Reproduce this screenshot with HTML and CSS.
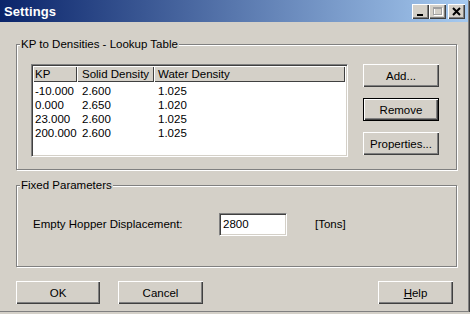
FILE: index.html
```html
<!DOCTYPE html>
<html lang="en">
<head>
  <meta charset="UTF-8">
  <title>Settings</title>
  <link rel="stylesheet" href="styles.css">
</head>

<body>
  <div class="window">

    <!-- Title bar -->
    <div class="titlebar">
      <span class="title">Settings</span>
      <div class="caption-buttons">
        <span class="cap-btn">
          <svg width="15" height="13" viewBox="0 0 15 13"><rect x="4" y="9" width="6" height="2" fill="#000"/></svg>
        </span>
        <span class="cap-btn">
          <svg width="15" height="13" viewBox="0 0 15 13">
            <rect x="4.5" y="3.5" width="8" height="7" fill="none" stroke="#fff"/>
            <rect x="3.5" y="2.5" width="8" height="7" fill="none" stroke="#a0a0a0"/>
            <line x1="3.5" y1="3.5" x2="11.5" y2="3.5" stroke="#a0a0a0"/>
          </svg>
        </span>
        <span class="cap-btn close">
          <svg width="15" height="13" viewBox="0 0 15 13"><path d="M4 3 L11 10 M11 3 L4 10" stroke="#000" stroke-width="2"/></svg>
        </span>
      </div>
    </div>

    <div class="client">

      <!-- Lookup table -->
      <fieldset class="group">
        <legend>KP to Densities - Lookup Table</legend>
        <div class="lookup-row">
          <div class="listview">
            <div class="lv-header">
              <span class="col kp">KP</span>
              <span class="col solid">Solid Density</span>
              <span class="col water">Water Density</span>
            </div>
            <div class="lv-body">
              <div class="lv-row"><span class="col kp">-10.000</span><span class="col solid">2.600</span><span class="col water">1.025</span></div>
              <div class="lv-row"><span class="col kp">0.000</span><span class="col solid">2.650</span><span class="col water">1.020</span></div>
              <div class="lv-row"><span class="col kp">23.000</span><span class="col solid">2.600</span><span class="col water">1.025</span></div>
              <div class="lv-row"><span class="col kp">200.000</span><span class="col solid">2.600</span><span class="col water">1.025</span></div>
            </div>
          </div>
          <div class="side-buttons">
            <button class="btn">Add...</button>
            <button class="btn focused">Remove</button>
            <button class="btn">Properties...</button>
          </div>
        </div>
      </fieldset>

      <!-- Fixed parameters -->
      <fieldset class="group fixed">
        <legend>Fixed Parameters</legend>
        <div class="param-row">
          <label class="param-label" for="hopper">Empty Hopper Displacement:</label>
          <input class="param-input" id="hopper" type="text" value="2800">
          <span class="unit">[Tons]</span>
        </div>
      </fieldset>

      <!-- Dialog buttons -->
      <div class="dialog-buttons">
        <button class="btn ok">OK</button>
        <button class="btn cancel">Cancel</button>
        <button class="btn help"><u>H</u>elp</button>
      </div>

    </div>
  </div>
</body>
</html>
```

FILE: styles.css
```css
body {
  margin: 0;
  background-color: #d4d0c8;
  font-family: "Liberation Sans", Arial, sans-serif;
  font-size: 11.5px;
  color: #000;
}

/* Window frame */
.window {
  width: 468px;
  height: 311px;
  display: flex;
  flex-direction: column;
  background-color: #d4d0c8;
  border-right: 1px solid #808080;
  border-bottom: 1px solid #808080;
  box-shadow: 1px 1px 0 #404040;
}

.titlebar {
  height: 22px;
  display: flex;
  align-items: center;
  background: linear-gradient(to right, #0a246a, #a6caf0);
  padding: 1px 3px 0 4px;
  box-sizing: border-box;
}
.title {
  color: #fff;
  font-weight: bold;
  font-size: 13px;
  letter-spacing: 0.1px;
  flex: 1;
}
.caption-buttons {
  display: flex;
}
.cap-btn {
  width: 17px;
  height: 15px;
  box-sizing: border-box;
  display: flex;
  align-items: center;
  justify-content: center;
  background-color: #d4d0c8;
  box-shadow: inset 1px 1px #fff, inset -1px -1px #404040, inset -2px -2px #808080;
}
.cap-btn.close {
  margin-left: 2px;
}

.client {
  flex: 1;
  padding: 15px 11px 0 16px;
}

/* Group boxes */
.group {
  margin: 0;
  padding: 0;
  min-width: 0;
  border: 1px solid #808080;
  box-shadow: 1px 1px 0 #fff, inset 1px 1px 0 #fff;
}
.group legend {
  margin-left: 3px;
  padding: 0 1px;
  line-height: 14px;
  background-color: #d4d0c8;
}
.group.fixed {
  margin-top: 8px;
}

.lookup-row {
  display: flex;
  padding: 13px 16px 12px 14px;
}

/* List view */
.listview {
  width: 317px;
  height: 93px;
  box-sizing: border-box;
  background-color: #fff;
  border: 1px solid;
  border-color: #808080 #fff #fff #808080;
  box-shadow: inset 1px 1px #404040, inset -1px -1px #d4d0c8;
  padding: 1px 2px 1px 1px;
}
.lv-header {
  display: flex;
  height: 16px;
  line-height: 16px;
}
.lv-header .col {
  background-color: #d4d0c8;
  box-sizing: border-box;
  box-shadow: inset 1px 1px #fff, inset -1px -1px #404040;
}
.col {
  display: block;
  white-space: nowrap;
}
.col.kp {
  width: 44px;
  padding-left: 2px;
  box-sizing: border-box;
}
.col.solid {
  width: 77px;
  padding-left: 5px;
  box-sizing: border-box;
}
.col.water {
  flex: 1;
  padding-left: 4px;
}
.lv-body {
  padding-top: 2px;
}
.lv-row {
  display: flex;
  height: 14px;
  line-height: 14px;
}

/* Buttons */
.side-buttons {
  display: flex;
  flex-direction: column;
  gap: 11px;
  margin-left: 15px;
}
.btn {
  width: 76px;
  height: 23px;
  padding: 0;
  font-family: inherit;
  font-size: inherit;
  color: #000;
  background-color: #d4d0c8;
  border: none;
  box-shadow: inset 1px 1px #fff, inset -1px -1px #404040, inset -2px -2px #808080;
}
.btn.focused {
  border: 1px solid #000;
}

/* Fixed parameters */
.param-row {
  display: flex;
  align-items: center;
  height: 24px;
  padding: 20px 0 30px 16px;
}
.param-label {
  width: 186px;
}
.param-input {
  width: 68px;
  height: 23px;
  box-sizing: border-box;
  margin: 0;
  padding: 0 3px;
  font-family: inherit;
  font-size: inherit;
  background-color: #fff;
  border: 1px solid;
  border-color: #808080 #fff #fff #808080;
  box-shadow: inset 1px 1px #404040, inset -1px -1px #d4d0c8;
  outline: none;
}
.unit {
  margin-left: 28px;
}

.dialog-buttons {
  display: flex;
  margin-top: 14px;
  padding-right: 4px;
}
.btn.ok {
  width: 84px;
}
.btn.cancel {
  width: 85px;
  margin-left: 18px;
}
.btn.help {
  width: 75px;
  margin-left: auto;
}
```
